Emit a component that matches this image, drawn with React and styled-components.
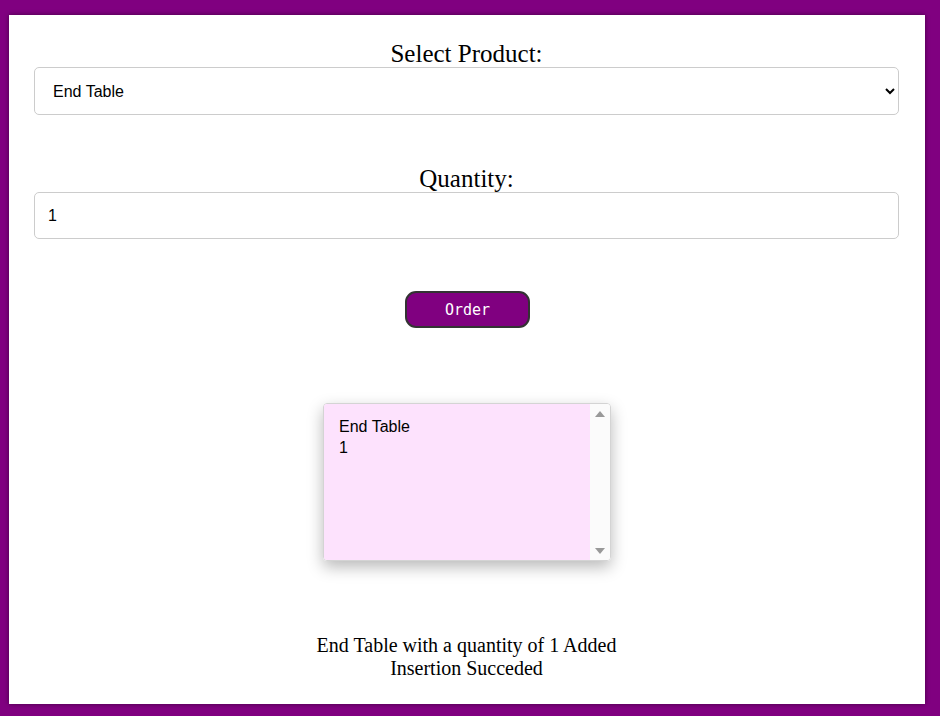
import React from "react";
import styled, { createGlobalStyle } from "styled-components";

const Global = createGlobalStyle`
  html, body { margin: 0; padding: 0; }
  body {
    background: #800080;
    font-family: "Liberation Serif", "Times New Roman", serif;
    height: 716px;
    overflow: hidden;
  }
`;

const Page = styled.div`
  box-sizing: border-box;
  margin: 15px 15px 0 9px;
  height: 689px;
  background: #fff;
  box-shadow: 0 0 5px rgba(0, 0, 0, 0.45);
  padding: 0 26px 0 25px;
  display: flex;
  flex-direction: column;
  align-items: stretch;
`;

const Label = styled.label`
  display: block;
  text-align: center;
  font-size: 25px;
  line-height: 27px;
  color: #000;
  margin-top: ${(p) => p.$top}px;
`;

const Select = styled.select`
  box-sizing: border-box;
  width: 100%;
  height: 48px;
  border: 1px solid #ccc;
  border-radius: 5px;
  padding: 0 10px 0 14px;
  font-family: "Liberation Sans", Arial, sans-serif;
  font-size: 16px;
  color: #000;
  background: #fff;
`;

const Input = styled.input`
  box-sizing: border-box;
  width: 100%;
  height: 47px;
  border: 1px solid #ccc;
  border-radius: 5px;
  padding: 0 13px;
  font-family: "Liberation Sans", Arial, sans-serif;
  font-size: 16px;
  color: #000;
  background: #fff;
`;

const ButtonRow = styled.div`
  display: flex;
  justify-content: center;
  margin-top: 52px;
`;

const OrderButton = styled.button`
  box-sizing: border-box;
  width: 125px;
  height: 37px;
  margin-left: 2px;
  background: #800080;
  color: #fff;
  border: 2px solid #333;
  border-radius: 11px;
  font-family: "DejaVu Sans Mono", "Liberation Mono", monospace;
  font-size: 15px;
  cursor: pointer;
`;

const OutputRow = styled.div`
  display: flex;
  justify-content: center;
  margin-top: 75px;
`;

const OutputBox = styled.div`
  box-sizing: border-box;
  width: 288px;
  height: 158px;
  margin-left: 1px;
  display: flex;
  border: 1px solid #d4d4d4;
  border-radius: 4px;
  overflow: hidden;
  box-shadow: 0 6px 16px rgba(0, 0, 0, 0.28);
`;

const Output = styled.textarea`
  box-sizing: border-box;
  flex: 1;
  min-width: 0;
  height: 100%;
  border: none;
  background: #fde2fd;
  padding: 12px 15px 10px;
  font-family: "Liberation Sans", Arial, sans-serif;
  font-size: 16px;
  line-height: 21px;
  color: #000;
  resize: none;
  overflow: hidden;
  outline: none;
`;

const ScrollTrack = styled.div`
  width: 20px;
  background: #fbfbfb;
  display: flex;
  flex-direction: column;
  justify-content: space-between;
  align-items: center;
  padding: 7px 0 6px;
  box-sizing: border-box;
`;

const Arrow = styled.span`
  width: 0;
  height: 0;
  border-left: 5px solid transparent;
  border-right: 5px solid transparent;
  ${(p) =>
    p.$down
      ? "border-top: 6px solid #999;"
      : "border-bottom: 6px solid #999;"}
`;

const Result = styled.div`
  margin-top: 73px;
  text-align: center;
  font-size: 20px;
  line-height: 23px;
  color: #000;
`;

export default function App() {
  return (
    <>
      <Global />
      <Page>
        <Label $top={25} htmlFor="product">Select Product:</Label>
        <Select id="product" defaultValue="End Table">
          <option>End Table</option>
          <option>Coffee Table</option>
          <option>Dining Table</option>
        </Select>
        <Label $top={50} htmlFor="qty">Quantity:</Label>
        <Input id="qty" type="text" defaultValue="1" />
        <ButtonRow>
          <OrderButton>Order</OrderButton>
        </ButtonRow>
        <OutputRow>
          <OutputBox>
            <Output readOnly value={"End Table\n1"} />
            <ScrollTrack>
              <Arrow />
              <Arrow $down />
            </ScrollTrack>
          </OutputBox>
        </OutputRow>
        <Result>
          End Table with a quantity of 1 Added
          <br />
          Insertion Succeded
        </Result>
      </Page>
    </>
  );
}
